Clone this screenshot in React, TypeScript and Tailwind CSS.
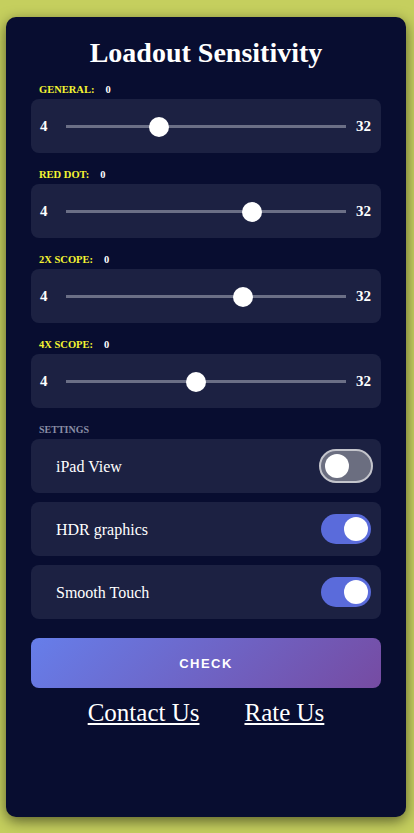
import React from "react";

const sliders = [
  { label: "GENERAL:", pos: 93 },
  { label: "RED DOT:", pos: 186 },
  { label: "2X SCOPE:", pos: 177 },
  { label: "4X SCOPE:", pos: 130 },
];

const toggles = [
  { label: "iPad View", on: false },
  { label: "HDR graphics", on: true },
  { label: "Smooth Touch", on: true },
];

function Toggle({ on }: { on: boolean }) {
  if (!on) {
    return (
      <div className="w-[54px] h-[34px] rounded-full border-2 border-[#c4c5cc] bg-[#6b6e80] flex items-center px-[4px]">
        <div className="w-[24px] h-[24px] rounded-full bg-white" />
      </div>
    );
  }
  return (
    <div className="w-[50px] h-[30px] mr-[2px] rounded-full bg-[#5a6bdb] flex items-center justify-end px-[3px]">
      <div className="w-[24px] h-[24px] rounded-full bg-white" />
    </div>
  );
}

export default function App() {
  return (
    <div className="min-h-[833px] w-[414px] bg-[#c5cf5e] pt-[17px] pl-[6px]" style={{ fontFamily: '"Liberation Serif", serif' }}>
      <div className="w-[400px] h-[800px] rounded-[10px] bg-[#080d30] shadow-[0_4px_14px_rgba(0,0,0,0.55)] px-[25px] pt-[20px]">
        <h1 className="text-center text-white font-bold text-[28px] leading-[32px]">Loadout Sensitivity</h1>
        <div className="mt-[14px]">
          {sliders.map((s, i) => (
            <div key={i} className={i > 0 ? "mt-[15px]" : ""}>
              <div className="flex items-center h-[12px] pl-[8px] text-[10.5px] font-bold leading-[12px] pt-[1px]">
                <span className="text-[#f5f532]">{s.label}</span>
                <span className="text-white ml-[11px]">0</span>
              </div>
              <div className="mt-[4px] h-[54px] rounded-[8px] bg-[#1c2142] flex items-center pl-[9px] pt-[1px]">
                <span className="w-[26px] text-white font-bold text-[15px]">4</span>
                <div className="relative w-[280px] h-[3px] bg-[#6b6f86]">
                  <div
                    className="absolute top-1/2 w-[20px] h-[20px] -mt-[10px] -ml-[10px] rounded-full bg-white"
                    style={{ left: s.pos }}
                  />
                </div>
                <span className="ml-[10px] text-white font-bold text-[15px]">32</span>
              </div>
            </div>
          ))}
        </div>
        <div className="mt-[15px] pl-[8px] h-[12px] text-[10px] leading-[12px] font-bold text-[#8a8ea6] pt-[1px]">SETTINGS</div>
        <div className="mt-[4px] flex flex-col gap-[9px]">
          {toggles.map((t, i) => (
            <div key={i} className="h-[54px] rounded-[8px] bg-[#1c2142] flex items-center justify-between pl-[25px] pr-[8px]">
              <span className="text-white text-[16px] pt-[1px]">{t.label}</span>
              <Toggle on={t.on} />
            </div>
          ))}
        </div>
        <button
          className="mt-[19px] w-full h-[50px] rounded-[8px] bg-[linear-gradient(135deg,#667eea,#764ba2)] text-white font-bold text-[13px] tracking-[1.5px] pt-[1px]"
          style={{ fontFamily: '"Liberation Sans", Arial, sans-serif' }}
        >
          CHECK
        </button>
        <div className="mt-[10px] flex justify-center gap-[45px] text-white text-[25px] leading-[30px]">
          <a className="underline">Contact Us</a>
          <a className="underline">Rate Us</a>
        </div>
      </div>
    </div>
  );
}
